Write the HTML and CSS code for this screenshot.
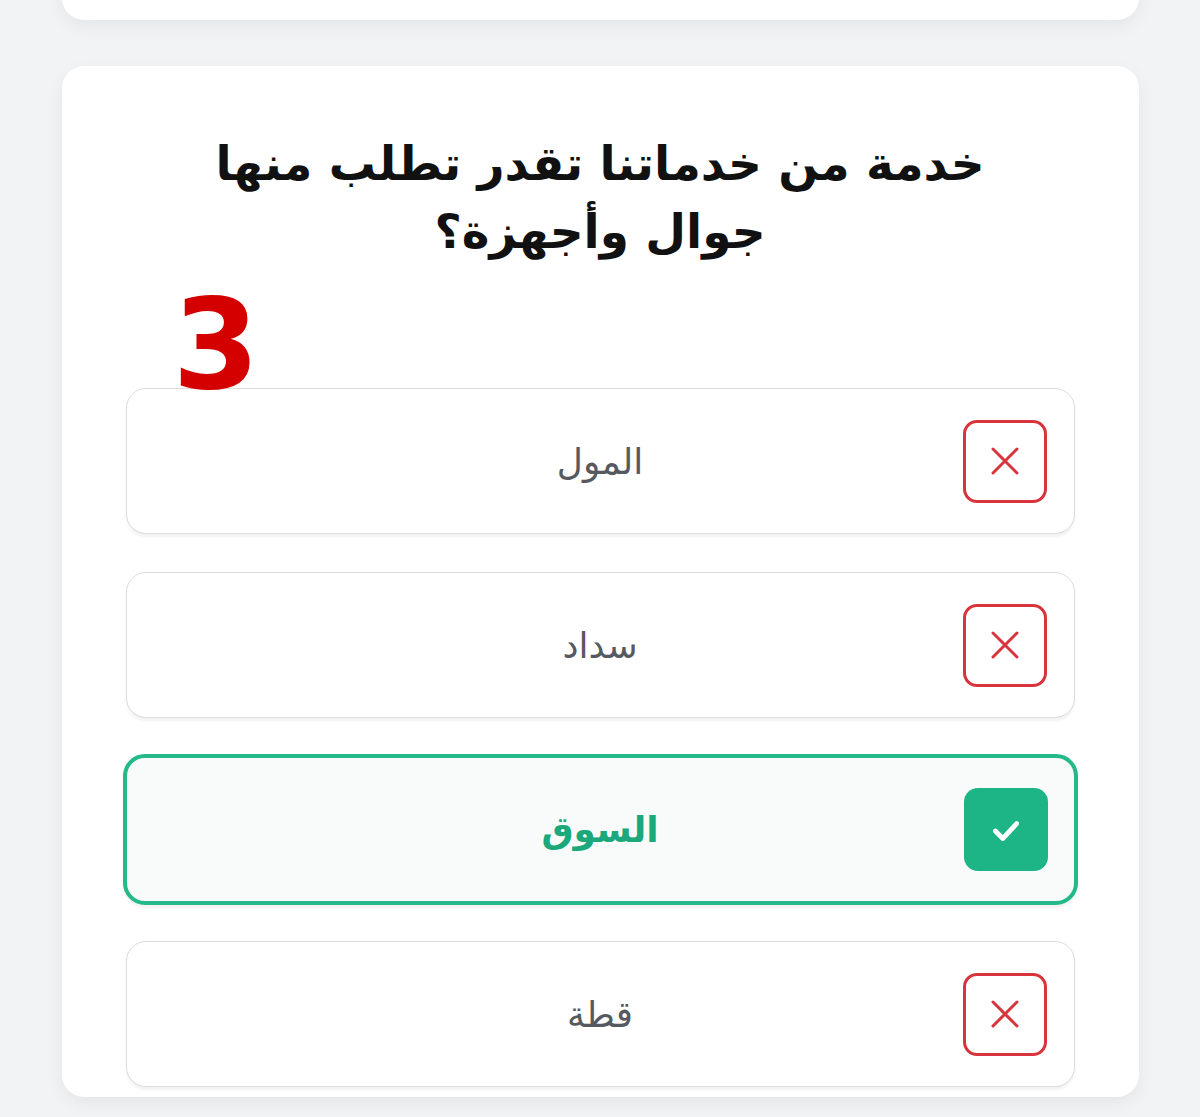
FILE: index.html
```html
<!DOCTYPE html>
<html lang="ar" dir="rtl">
<head>
<meta charset="utf-8">
<title>سؤال</title>
<link rel="stylesheet" href="styles.css">
</head>
<body>
<div class="page">
  <div class="card card-top"></div>
  <div class="card card-main">
    <h1 class="question">خدمة من خدماتنا تقدر تطلب منها<br>جوال وأجهزة؟</h1>
    <div class="number">3</div>
    <div class="options">
      <div class="option">
        <span class="mark mark-wrong"><svg viewBox="0 0 32 32" width="32" height="32"><path d="M4 4L28 28M28 4L4 28" stroke="#d8343c" stroke-width="3" stroke-linecap="round" fill="none"/></svg></span>
        <span class="label">المول</span>
      </div>
      <div class="option">
        <span class="mark mark-wrong"><svg viewBox="0 0 32 32" width="32" height="32"><path d="M4 4L28 28M28 4L4 28" stroke="#d8343c" stroke-width="3" stroke-linecap="round" fill="none"/></svg></span>
        <span class="label">سداد</span>
      </div>
      <div class="option option-correct">
        <span class="mark mark-right"><svg viewBox="0 0 32 32" width="34" height="34"><path d="M6 17L13 24L26 10" stroke="#ffffff" stroke-width="4.5" stroke-linecap="round" stroke-linejoin="round" fill="none"/></svg></span>
        <span class="label">السوق</span>
      </div>
      <div class="option">
        <span class="mark mark-wrong"><svg viewBox="0 0 32 32" width="32" height="32"><path d="M4 4L28 28M28 4L4 28" stroke="#d8343c" stroke-width="3" stroke-linecap="round" fill="none"/></svg></span>
        <span class="label">قطة</span>
      </div>
    </div>
  </div>
</div>
</body>
</html>
```
FILE: styles.css
```css
* { box-sizing: border-box; }
html, body {
  margin: 0;
  padding: 0;
}
body {
  background: #f2f3f4;
  font-family: "DejaVu Sans", "Noto Sans", sans-serif;
  height: 1117px;
  overflow: hidden;
}
.page {
  display: flex;
  flex-direction: column;
  align-items: center;
  gap: 46px;
  margin-top: -100px;
}
.card {
  width: 1077px;
  background: #ffffff;
  border-radius: 22px;
  box-shadow: 0 6px 18px rgba(0, 0, 0, 0.06);
}
.card-top {
  height: 120px;
}
.card-main {
  position: relative;
  padding: 64px 64px 10px 64px;
  min-height: 1031px;
}
.question {
  margin: 0;
  text-align: center;
  font-weight: bold;
  font-size: 47px;
  line-height: 68px;
  color: #111111;
}
.number {
  position: absolute;
  left: 111px;
  top: 216px;
  font-family: "DejaVu Sans", sans-serif;
  font-weight: bold;
  font-size: 125px;
  line-height: 1;
  color: #d40000;
  direction: ltr;
}
.options {
  margin-top: 122px;
  display: flex;
  flex-direction: column;
  gap: 38px;
}
.option {
  height: 146px;
  display: grid;
  align-items: center;
  border: 1px solid #dcdcdc;
  border-radius: 20px;
  background: #ffffff;
  box-shadow: 0 3px 3px rgba(0, 0, 0, 0.05);
  padding: 0 27px;
}
.option > * {
  grid-area: 1 / 1;
}
.label {
  justify-self: center;
  font-size: 36px;
  color: #555a60;
}
.mark {
  justify-self: start;
  width: 84px;
  height: 83px;
  border-radius: 14px;
  display: flex;
  align-items: center;
  justify-content: center;
}
.mark-wrong {
  border: 3px solid #d8343c;
}
.option-correct {
  height: 151px;
  margin: -2px -3px;
  border: 4px solid #25b888;
  border-radius: 22px;
  background: #f8fbfa;
  padding: 0 26px;
}
.option-correct .label {
  color: #1ba97c;
  font-weight: bold;
}
.mark-right {
  background: #1db585;
}
```
